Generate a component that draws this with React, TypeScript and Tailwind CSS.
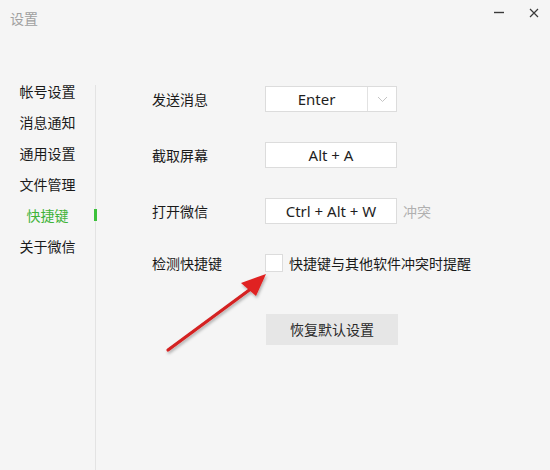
import React from 'react';

const FONT = "font-['Microsoft_YaHei','Noto_Sans_CJK_SC',sans-serif]";

const menu = ['帐号设置', '消息通知', '通用设置', '文件管理', '快捷键', '关于微信'];

function KeyBox({ text, dropdown }: { text: string; dropdown?: boolean }) {
  return (
    <div className="flex h-[26px] w-[132px] border border-[#dcdcdc] bg-white">
      <div className="flex flex-1 items-center justify-center font-['Noto_Sans',sans-serif] text-[15px] text-[#1e1e1e]">
        {text}
      </div>
      {dropdown && (
        <div className="flex w-[29px] items-center justify-center border-l border-[#e2e2e2]">
          <svg width="11" height="7" viewBox="0 0 11 7">
            <path d="M1 1 L5.5 5.5 L10 1" fill="none" stroke="#c4c4c4" strokeWidth="1" />
          </svg>
        </div>
      )}
    </div>
  );
}

export default function App() {
  return (
    <div className={`relative h-[470px] w-[550px] overflow-hidden bg-[#f5f5f5] ${FONT}`}>
      <div className="flex h-[76px] items-start justify-between">
        <div className="pl-[10px] pt-[8px] text-[14px] leading-[20px] text-[#a0a0a0]">设置</div>
        <div className="flex items-center gap-[25px] pr-[11px] pt-[8px]">
          <svg width="10" height="10" viewBox="0 0 10 10">
            <path d="M0 4.5 H10" stroke="#3a3a3a" strokeWidth="1.4" />
          </svg>
          <svg width="10" height="10" viewBox="0 0 10 10">
            <path d="M1 1 L9 9 M9 1 L1 9" stroke="#3a3a3a" strokeWidth="1.2" />
          </svg>
        </div>
      </div>

      <div className="flex">
        <div className="flex w-[95px] flex-col">
          {menu.map((m) => {
            const active = m === '快捷键';
            return (
              <div
                key={m}
                className={`relative flex h-[31px] items-center justify-center text-[14px] ${active ? 'text-[#3fb33a]' : 'text-[#1a1a1a]'}`}
              >
                {m}
                {active && <span className="absolute right-[-2px] top-[9px] h-[12px] w-[3px] bg-[#3cc13b]" />}
              </div>
            );
          })}
        </div>
        <div className="mt-[9px] h-[390px] w-px bg-[#e3e3e3]" />

        <div className="flex flex-col pl-[56px] pt-[10px] text-[14px] text-[#1a1a1a]">
          <div className="flex items-center">
            <span className="w-[113px]">发送消息</span>
            <KeyBox text="Enter" dropdown />
          </div>
          <div className="mt-[30px] flex items-center">
            <span className="w-[113px]">截取屏幕</span>
            <KeyBox text="Alt + A" />
          </div>
          <div className="mt-[30px] flex items-center">
            <span className="w-[113px]">打开微信</span>
            <KeyBox text="Ctrl + Alt + W" />
            <span className="ml-[6px] text-[#b0b0b0]">冲突</span>
          </div>
          <div className="mt-[30px] flex h-[18px] items-center">
            <span className="w-[113px]">检测快捷键</span>
            <span className="h-[18px] w-[18px] border border-[#dcdcdc] bg-white" />
            <span className="ml-[6px]">快捷键与其他软件冲突时提醒</span>
          </div>
          <div className="mt-[42px] pl-[114px]">
            <button className="flex h-[31px] w-[132px] items-center justify-center bg-[#e6e6e6] text-[14px] text-[#2a2a2a]">
              恢复默认设置
            </button>
          </div>
        </div>
      </div>

      <svg className="pointer-events-none absolute left-0 top-0" width="550" height="470" viewBox="0 0 550 470">
        <defs>
          <filter id="sh" x="-20%" y="-20%" width="140%" height="140%">
            <feDropShadow dx="1" dy="2" stdDeviation="1.5" floodColor="#000" floodOpacity="0.3" />
          </filter>
        </defs>
        <g filter="url(#sh)">
          <path d="M168 350 L252 288" stroke="#d42020" strokeWidth="3.2" strokeLinecap="round" />
          <path d="M266 274 L241 283 L256 296 Z" fill="#e02020" />
        </g>
      </svg>
    </div>
  );
}
